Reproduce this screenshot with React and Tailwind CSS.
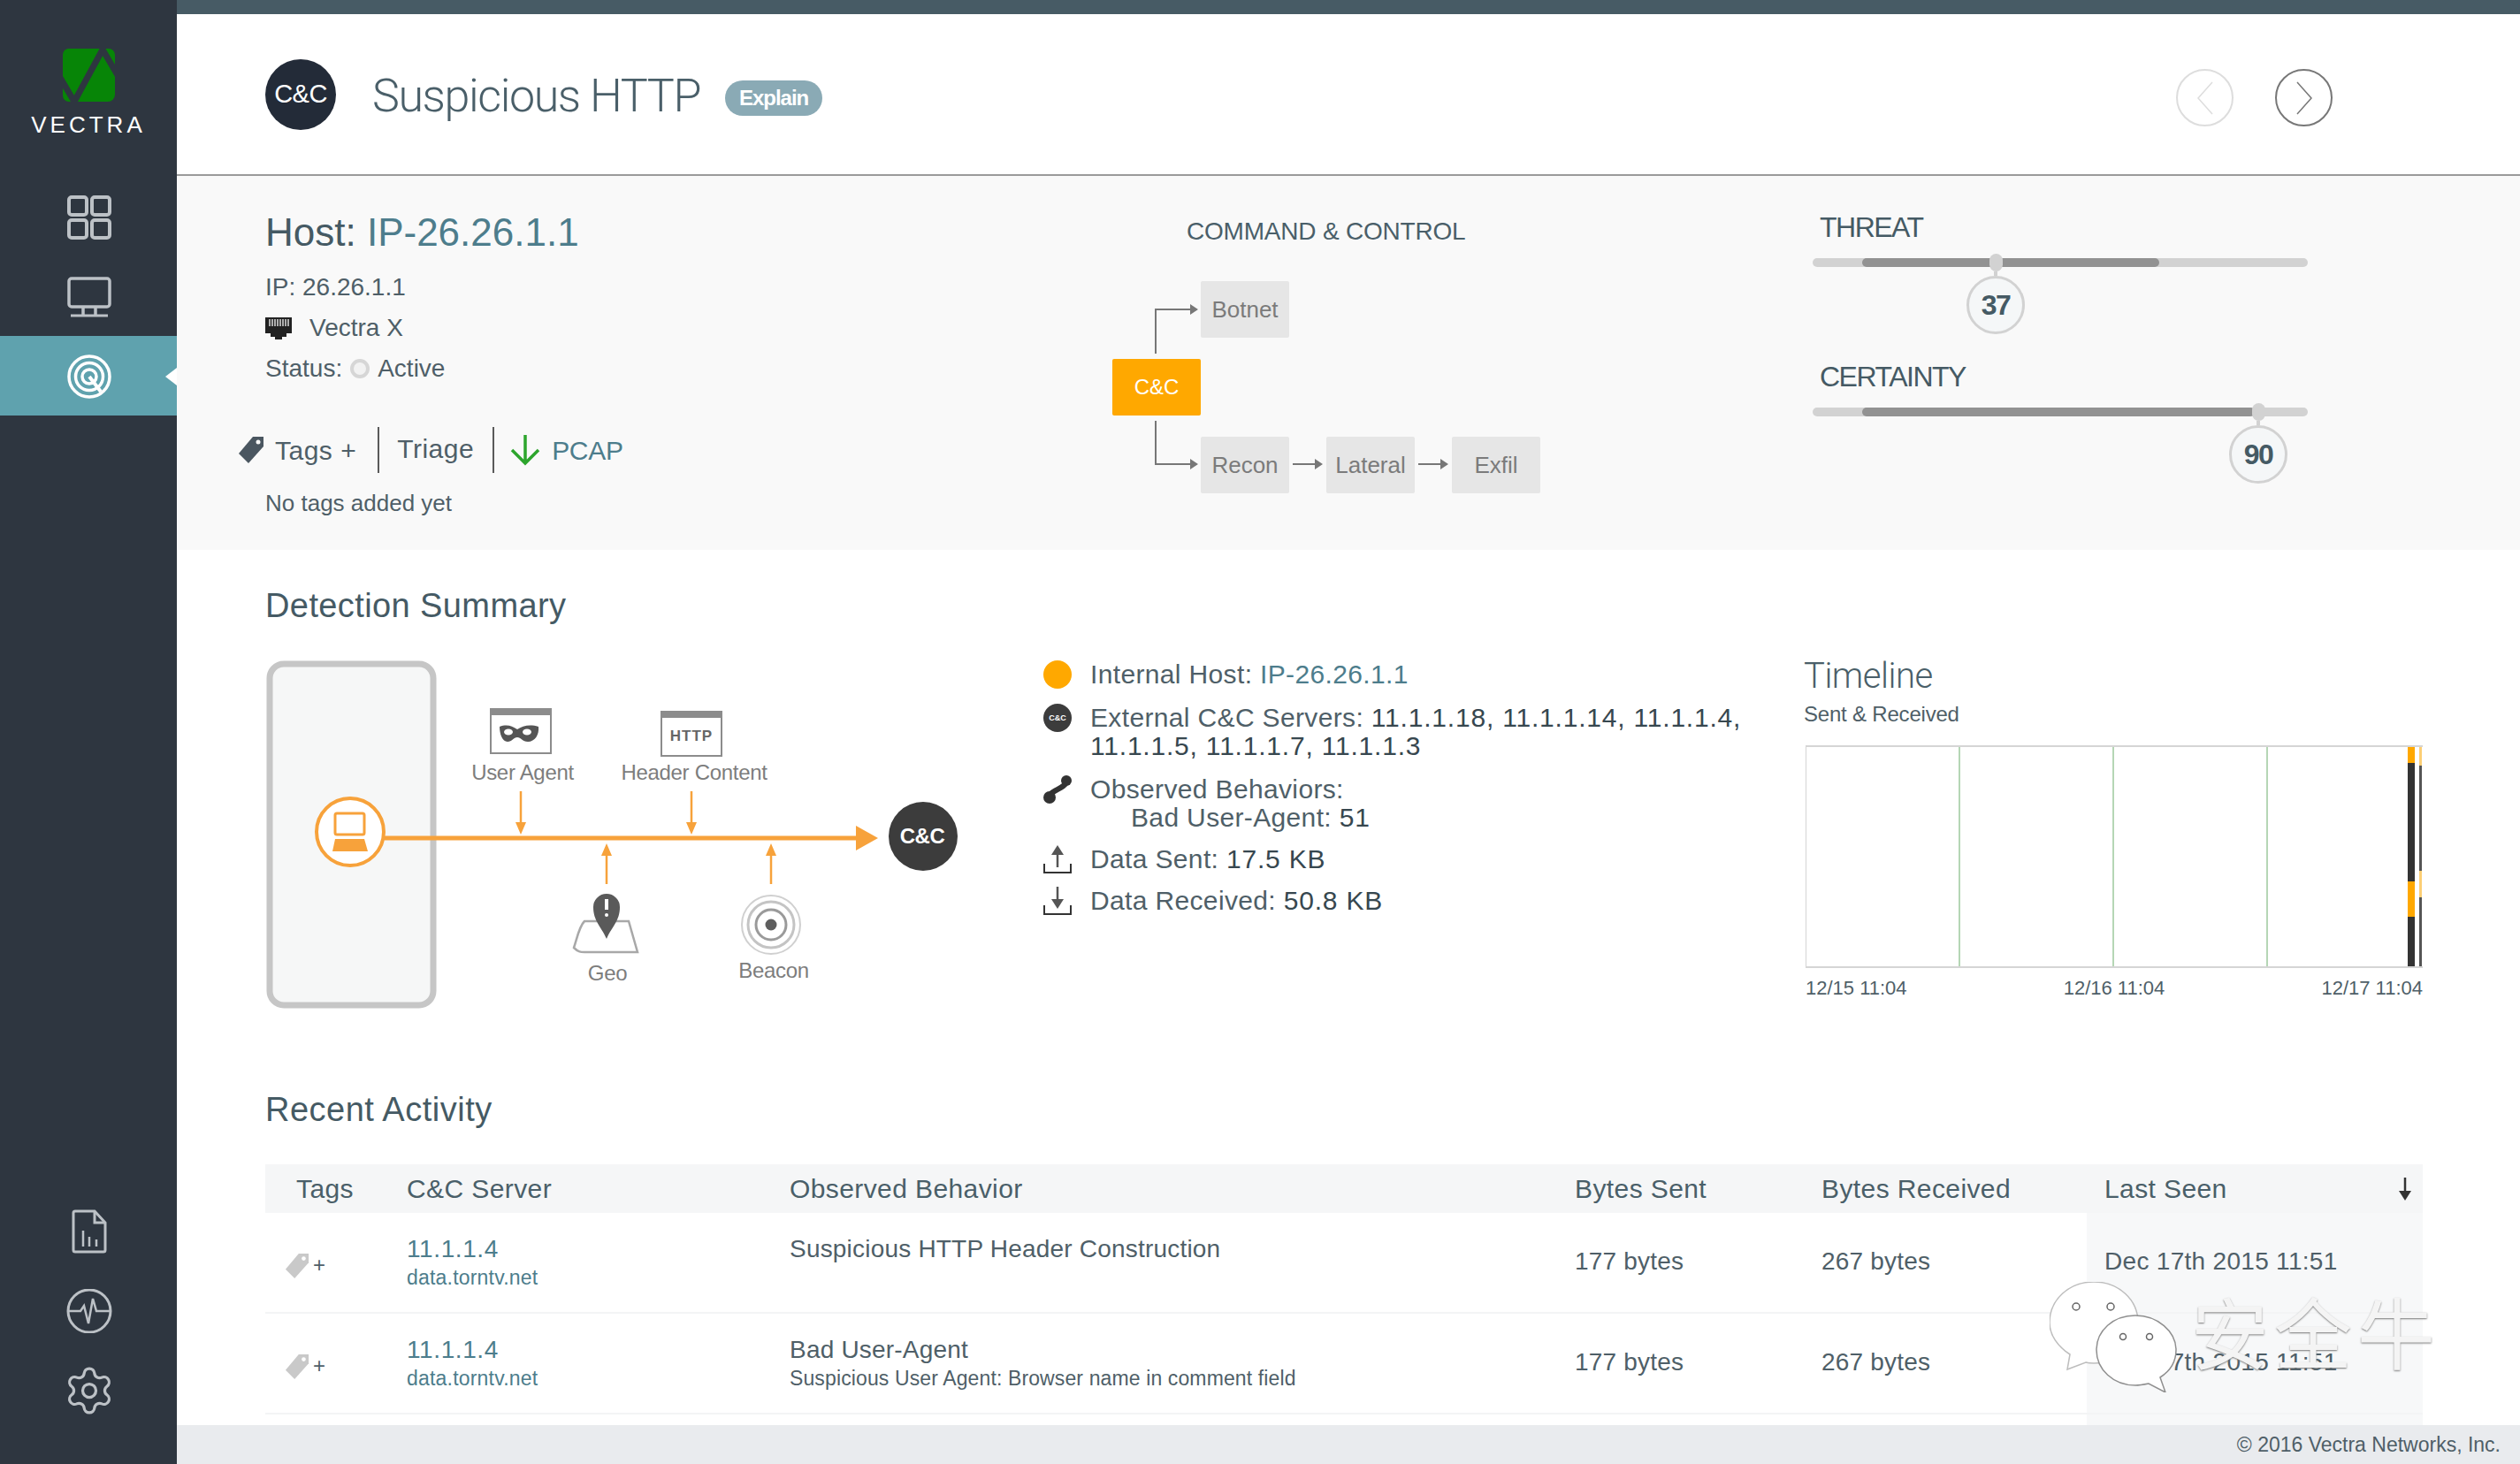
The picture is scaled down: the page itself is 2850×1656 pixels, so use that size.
import { Settings } from 'lucide-react';

const font = "[font-family:'Liberation_Sans','Noto_Sans_CJK_SC',sans-serif]";

const GridIcon = () => (
  <svg width="50" height="50" viewBox="0 0 50 50" fill="none" stroke="#bcc1c6" strokeWidth="4">
    <rect x="2" y="2" width="20" height="20" rx="3" />
    <rect x="28" y="2" width="20" height="20" rx="3" />
    <rect x="2" y="28" width="20" height="20" rx="3" />
    <rect x="28" y="28" width="20" height="20" rx="3" />
  </svg>
);

const MonitorIcon = () => (
  <svg width="50" height="46" viewBox="0 0 50 46" fill="none" stroke="#bcc1c6" strokeWidth="3.5">
    <rect x="2" y="2" width="46" height="32" rx="3" />
    <path d="M18 34v9M32 34v9" />
    <path d="M4 44h42" strokeWidth="3" />
  </svg>
);

const TargetIcon = () => (
  <svg width="50" height="50" viewBox="0 0 50 50" fill="none" stroke="#fff" strokeWidth="3.5">
    <circle cx="25" cy="25" r="23" />
    <circle cx="25" cy="25" r="15.5" />
    <circle cx="25" cy="25" r="8" />
    <path d="M25 25l13 17" strokeWidth="4" />
  </svg>
);

const ReportIcon = () => (
  <svg width="40" height="50" viewBox="0 0 40 50" fill="none" stroke="#bcc1c6" strokeWidth="3">
    <path d="M4 2h22l12 13v31a2 2 0 0 1-2 2H4a2 2 0 0 1-2-2V4a2 2 0 0 1 2-2z" />
    <path d="M26 2v13h12" />
    <path d="M13 24v18M20 31v11M28 34v8" strokeWidth="2.5" />
  </svg>
);

const PulseIcon = () => (
  <svg width="52" height="50" viewBox="0 0 52 50" fill="none" stroke="#bcc1c6" strokeWidth="3">
    <circle cx="26" cy="25" r="24" />
    <path d="M2 25h14l4-6 5 20 5-28 4 14h16" strokeWidth="2.5" />
  </svg>
);

const Logo = () => (
  <svg width="59" height="60" viewBox="72 55 59 60">
    <path d="M78 55h46a7 7 0 0 1 7 7v45a8 8 0 0 1-8 8H79a7 7 0 0 1-7-7V62a7 7 0 0 1 6-7z" fill="#078507" />
    <path d="M68 86l17 29L117 56l17 29" fill="none" stroke="#2e3640" strokeWidth="7" />
  </svg>
);

const NavItem = ({ active, children }) => (
  <div className={active ? 'relative h-[90px] pl-[2px] pt-[2px] flex items-center justify-center bg-[#5fa2ae]' : 'h-[90px] pl-[2px] pt-[2px] flex items-center justify-center'}>
    {children}
    {active && <div className="absolute right-0 top-[36px] w-0 h-0 border-y-[10px] border-y-transparent border-r-[13px] border-r-white"></div>}
  </div>
);

const Sidebar = () => (
  <div className="w-[200px] shrink-0 bg-[#2e3640] flex flex-col">
    <div className="h-[200px] flex flex-col items-center pt-[55px]">
      <Logo />
      <span className="mt-[11px] text-[26px] leading-[30px] tracking-[4px] text-white">VECTRA</span>
    </div>
    <NavItem><GridIcon /></NavItem>
    <NavItem><MonitorIcon /></NavItem>
    <NavItem active><TargetIcon /></NavItem>
    <div className="flex-1"></div>
    <NavItem><ReportIcon /></NavItem>
    <NavItem><PulseIcon /></NavItem>
    <NavItem><Settings size={60} color="#bcc1c6" strokeWidth={1.3} /></NavItem>
    <div className="h-[39px]"></div>
  </div>
);

const Chevron = ({ dir, color }) => (
  <div className="w-[65px] h-[65px] rounded-full border-2 flex items-center justify-center" style={{ borderColor: color }}>
    <svg width="20" height="38" viewBox="0 0 20 38" fill="none" stroke={color} strokeWidth="1.5">
      <path d={dir === 'left' ? 'M18 1L2 19l16 18' : 'M2 1l16 18L2 37'} />
    </svg>
  </div>
);

const Header = () => (
  <div className="h-[183px] shrink-0 bg-white border-b-2 border-[#9a9a9a] flex items-center pl-[100px] pr-[212px]">
    <div className="w-[80px] h-[80px] rounded-full bg-[#232b38] flex items-center justify-center text-white text-[29px] tracking-[-0.5px]">C&amp;C</div>
    <h1 className="ml-[41px] mt-[4px] text-[52px] leading-[60px] tracking-[-1.4px] text-[#4a5f69] [font-family:Roboto,sans-serif] font-light">Suspicious HTTP</h1>
    <span className="ml-[28px] mt-[9px] w-[110px] h-[40px] rounded-full bg-[#8aaab5] text-white text-[24px] font-bold tracking-[-1px] flex items-center justify-center">Explain</span>
    <div className="ml-auto mt-[8px] flex gap-[47px]">
      <Chevron dir="left" color="#dddddd" />
      <Chevron dir="right" color="#777777" />
    </div>
  </div>
);

const FlowBox = ({ className, children }) => (
  <div className={`absolute w-[100px] h-[64px] flex items-center justify-center rounded-[2px] text-[26px] ${className}`}>{children}</div>
);

const CommandFlow = () => (
  <div className="relative w-[792px] shrink-0">
    <div className="ml-[84px] mt-[43px] h-[40px] flex items-center text-[28px] tracking-[-0.2px] text-[#4a5f69] whitespace-nowrap">COMMAND &amp; CONTROL</div>
    <svg className="absolute left-0 top-0" width="792" height="423" viewBox="1258 199 792 423" fill="none" stroke="#777" strokeWidth="2">
      <path d="M1307 400v-50h42M1307 476v49h42M1462 525h26M1604 525h26" />
      <path d="M1346 344l9 6-9 6zM1346 519l9 6-9 6zM1487 519l9 6-9 6zM1629 519l9 6-9 6z" fill="#777" stroke="none" />
    </svg>
    <FlowBox className="left-[100px] top-[119px] bg-[#e6e6e6] text-[#7b7b7b]">Botnet</FlowBox>
    <FlowBox className="left-0 top-[207px] bg-[#ffa800] text-white !text-[24px]">C&amp;C</FlowBox>
    <FlowBox className="left-[100px] top-[295px] bg-[#e6e6e6] text-[#7b7b7b]">Recon</FlowBox>
    <FlowBox className="left-[242px] top-[295px] bg-[#e6e6e6] text-[#7b7b7b]">Lateral</FlowBox>
    <FlowBox className="left-[384px] top-[295px] bg-[#e6e6e6] text-[#7b7b7b]">Exfil</FlowBox>
  </div>
);

const Score = ({ label, value, fillClass, knobClass, className }) => (
  <div className={className}>
    <div className="h-[40px] pl-[8px] flex items-center text-[32px] tracking-[-1.5px] text-[#455a64]">{label}</div>
    <div className="relative mt-[15px] h-[10px] rounded-full bg-[#d2d2d2] pl-[56px]">
      <div className={`h-[10px] rounded-full bg-[#929292] ${fillClass}`}></div>
      <div className={`absolute top-[-5px] w-[66px] flex flex-col items-center ${knobClass}`}>
        <div className="w-[15px] h-[20px] rounded-full bg-[#d2d2d2]"></div>
        <div className="w-[4px] h-[5px] bg-[#d2d2d2]"></div>
        <div className="w-[66px] h-[66px] rounded-full border-[3px] border-[#d2d2d2] bg-[#f5f7f8] flex items-center justify-center text-[32px] font-bold tracking-[-1.5px] text-[#455a64]">{value}</div>
      </div>
    </div>
  </div>
);

const HostInfo = () => (
  <div className="w-[1058px] shrink-0 pl-[100px]">
    <div className="mt-[40px] h-[48px] flex items-center text-[44px] text-[#455a64] whitespace-pre">Host: <span className="text-[#4d7d8c]">IP-26.26.1.1</span></div>
    <div className="mt-[18px] h-[40px] flex items-center text-[28px] text-[#4f5f68]">IP: 26.26.1.1</div>
    <div className="mt-[6px] h-[40px] flex items-center text-[28px] text-[#4f5f68]">
      <svg width="30" height="25" viewBox="0 0 30 25" className="mr-[20px]">
        <path d="M0 0h30v18h-6v4h-5v3h-8v-3H6v-4H0z" fill="#222" />
        <path d="M5 2v8M8 2v8M11 2v8M14 2v8M17 2v8M20 2v8M23 2v8M26 2v8" stroke="#ddd" strokeWidth="1.5" />
      </svg>
      Vectra X
    </div>
    <div className="mt-[6px] h-[40px] flex items-center text-[28px] text-[#4f5f68]">
      Status:
      <span className="mx-[9px] w-[22px] h-[22px] rounded-full border-[4px] border-[#d6d6d6] bg-[#f2f2f2]"></span>
      Active
    </div>
    <div className="ml-[-30px] mt-[45px] h-[54px] flex items-center text-[30px] text-[#4f5f68]">
      <svg width="28" height="30" viewBox="0 0 28 30" className="mr-[13px]">
        <path d="M16 0h12v11L11 30 0 19z" fill="#4a5660" />
        <circle cx="22" cy="6" r="2.5" fill="#f9f9f9" />
      </svg>
      <span className="tracking-[0.5px]">Tags +</span>
      <div className="ml-[24px] w-[2px] h-[52px] bg-[#5a5a5a]"></div>
      <span className="ml-[20px] mb-[4px] tracking-[0.5px]">Triage</span>
      <div className="ml-[21px] w-[2px] h-[52px] bg-[#5a5a5a]"></div>
      <svg width="36" height="36" viewBox="0 0 36 36" fill="none" stroke="#2da52d" strokeWidth="3.5" className="ml-[17px]">
        <path d="M18 1v32M3 18l15 15 15-15" />
      </svg>
      <span className="ml-[12px] tracking-[-0.3px] text-[#4d7d8c]">PCAP</span>
    </div>
    <div className="mt-[15px] h-[36px] flex items-center text-[26px] text-[#4f5f68]">No tags added yet</div>
  </div>
);

const SubHeader = () => (
  <div className="h-[423px] shrink-0 bg-[#f9f9f9] flex">
    <HostInfo />
    <CommandFlow />
    <div className="w-[560px] shrink-0 pt-[38px]">
      <Score label="THREAT" value="37" fillClass="w-[336px]" knobClass="left-[174px]" />
      <Score label="CERTAINTY" value="90" fillClass="w-[444px]" knobClass="left-[471px]" className="mt-[104px]" />
    </div>
  </div>
);

const DiagramLabel = ({ className, children }) => (
  <span className={`absolute -translate-x-1/2 -translate-y-1/2 text-[24px] tracking-[-0.3px] text-[#7d7d7d] whitespace-nowrap ${className}`}>{children}</span>
);

const DetectionDiagram = () => (
  <div className="relative w-[880px] h-[410px] shrink-0">
    <svg className="absolute inset-0" width="880" height="410" viewBox="300 740 880 410" fill="none">
      <rect x="305" y="751" width="185" height="386" rx="16" fill="#f6f7f7" stroke="#c6c6c6" strokeWidth="7" />
      <g transform="translate(0 2)">
        {/* arrows */}
        <path d="M435 946h535" stroke="#f7a23b" strokeWidth="5" />
        <path d="M968 932l25 14-25 14z" fill="#f7a23b" />
        <path d="M589 893v38M782 893v38M686 965v33M872 965v33" stroke="#f7a23b" strokeWidth="2.5" />
        <path d="M583 928l6 14 6-14zM776 928l6 14 6-14zM680 966l6-14 6 14zM866 966l6-14 6 14z" fill="#f7a23b" />
        {/* c&c */}
        <circle cx="1044" cy="944" r="39" fill="#3c3c3c" />
        {/* user agent */}
        <rect x="555" y="800" width="68" height="50" stroke="#8c8c8c" strokeWidth="2" fill="#fff" />
        <rect x="555" y="800" width="68" height="7" fill="#8c8c8c" />
        <path d="M565 820c8-3 14-1 20 3 6-4 14-6 24-3 1 9-4 17-12 17-6 0-8-5-12-5s-6 5-11 5c-6 0-9-9-9-17z" fill="#555" />
        <ellipse cx="575" cy="826" rx="5" ry="3.5" fill="#fff" />
        <ellipse cx="596" cy="826" rx="5" ry="3.5" fill="#fff" />
        {/* header content */}
        <rect x="748" y="803" width="68" height="50" stroke="#8c8c8c" strokeWidth="2" fill="#fff" />
        <rect x="748" y="803" width="68" height="7" fill="#8c8c8c" />
        {/* geo */}
        <path d="M661 1040c-6 6-8 18-12 30 5 5 8 5 12 5h60l-10-35z" fill="#fff" stroke="#a8a8a8" strokeWidth="2.5" />
        <path d="M686 1060c-6-14-15-20-15-36a15 15 0 0 1 30 0c0 16-9 22-15 36z" fill="#5a5a5a" />
        <path d="M686 1015v12" stroke="#fff" strokeWidth="4" />
        <circle cx="686" cy="1033" r="2" fill="#fff" />
        {/* beacon */}
        <circle cx="872" cy="1044" r="33" stroke="#d0d0d0" strokeWidth="2" />
        <circle cx="872" cy="1044" r="26" stroke="#c4c4c4" strokeWidth="3" />
        <circle cx="872" cy="1044" r="17" stroke="#9a9a9a" strokeWidth="3" />
        <circle cx="872" cy="1044" r="6.5" fill="#5e5e5e" />
      </g>
      {/* laptop */}
      <circle cx="396" cy="941" r="38" fill="#fff" stroke="#f7a23b" strokeWidth="4" />
      <rect x="379" y="920" width="33" height="24" rx="2" stroke="#f7a23b" strokeWidth="3" />
      <path d="M379 949h33l4 14h-40z" fill="#f7a23b" />
    </svg>
    <DiagramLabel className="left-[291px] top-[134px]">User Agent</DiagramLabel>
    <DiagramLabel className="left-[485px] top-[134px]">Header Content</DiagramLabel>
    <DiagramLabel className="left-[387px] top-[361px]">Geo</DiagramLabel>
    <DiagramLabel className="left-[575px] top-[358px]">Beacon</DiagramLabel>
    <span className="absolute left-[743px] top-[206px] -translate-x-1/2 -translate-y-1/2 text-[24px] font-bold tracking-[-0.5px] text-white">C&amp;C</span>
    <span className="absolute left-[482px] top-[93px] -translate-x-1/2 -translate-y-1/2 text-[17px] font-bold tracking-[1px] text-[#666]">HTTP</span>
  </div>
);

const DetailRow = ({ icon, className, children }) => (
  <div className={`flex text-[30px] leading-[32px] tracking-[0.35px] text-[#4f5f68] ${className || ''}`}>
    <div className="w-[53px] shrink-0 h-[32px] flex items-center">{icon}</div>
    <div>{children}</div>
  </div>
);

const Dark = ({ children }) => <span className="tracking-[0.8px] text-[#37474f]">{children}</span>;

const Details = () => (
  <div className="w-[860px] shrink-0 pt-[7px] flex flex-col gap-[17px]">
    <DetailRow icon={<div className="w-[32px] h-[32px] rounded-full bg-[#ffa800]"></div>}>
      Internal Host: <span className="text-[#4d7d8c]">IP-26.26.1.1</span>
    </DetailRow>
    <DetailRow icon={<div className="w-[32px] h-[32px] rounded-full bg-[#3c3c3c] flex items-center justify-center text-[9px] font-bold tracking-normal text-white">C&amp;C</div>}>
      External C&amp;C Servers: <Dark>11.1.1.18, 11.1.1.14, 11.1.1.4,</Dark>
      <br />
      <Dark>11.1.1.5, 11.1.1.7, 11.1.1.3</Dark>
    </DetailRow>
    <DetailRow icon={
      <svg width="32" height="32" viewBox="0 0 32 32" fill="none" stroke="#333" strokeWidth="6">
        <path d="M26 7c-2 9-18 9-20 18" />
        <circle cx="26" cy="6" r="6" fill="#333" stroke="none" />
        <circle cx="7" cy="25" r="7" fill="#333" stroke="none" />
      </svg>
    }>
      Observed Behaviors:
      <div className="pl-[46px]">Bad User-Agent: <Dark>51</Dark></div>
    </DetailRow>
    <DetailRow className="mt-[-2px]" icon={
      <svg width="32" height="32" viewBox="0 0 32 32" fill="none">
        <path d="M16 0l7 11H9z" fill="#555" />
        <path d="M16 10v15" stroke="#555" strokeWidth="2.5" />
        <path d="M1 21v10h30V21" stroke="#333" strokeWidth="2" />
      </svg>
    }>
      Data Sent: <Dark>17.5 KB</Dark>
    </DetailRow>
    <DetailRow className="mt-[-2px]" icon={
      <svg width="32" height="32" viewBox="0 0 32 32" fill="none">
        <path d="M16 25l7-11H9z" fill="#555" />
        <path d="M16 0v15" stroke="#555" strokeWidth="2.5" />
        <path d="M1 21v10h30V21" stroke="#333" strokeWidth="2" />
      </svg>
    }>
      Data Received: <Dark>50.8 KB</Dark>
    </DetailRow>
  </div>
);

const Timeline = () => (
  <div className="w-[700px] shrink-0 pt-[1px]">
    <div className="h-[48px] flex items-center text-[40px] tracking-[-0.5px] text-[#4a5f69] [font-family:Roboto,sans-serif] font-light">Timeline</div>
    <div className="mt-[4px] h-[30px] flex items-center text-[24px] tracking-[-0.2px] text-[#4f5f68]">Sent &amp; Received</div>
    <div className="relative ml-[2px] mt-[20px] h-[252px] border-y-2 border-l border-[#d5d5d5] grid grid-cols-[174px_174px_174px_1fr]">
      <div className="border-r-2 border-[#b5d6b5]"></div>
      <div className="border-r-2 border-[#b5d6b5]"></div>
      <div className="border-r-2 border-[#b5d6b5]"></div>
      <div className="flex justify-end gap-[5px] pr-[1px]">
        <div className="w-[8px] flex flex-col">
          <div className="h-[18px] bg-[#ffa800]"></div>
          <div className="h-[134px] bg-[#333]"></div>
          <div className="h-[40px] bg-[#ffa800]"></div>
          <div className="flex-1 bg-[#333]"></div>
        </div>
        <div className="w-[3px] flex flex-col">
          <div className="h-[21px] bg-[#fdcf75]"></div>
          <div className="h-[119px] bg-[#555]"></div>
          <div className="h-[30px] bg-[#fdcf75]"></div>
          <div className="flex-1 bg-[#555]"></div>
        </div>
      </div>
    </div>
    <div className="ml-[2px] mt-[10px] flex justify-between text-[22px] leading-[26px] text-[#4f5f68]">
      <span>12/15 11:04</span>
      <span>12/16 11:04</span>
      <span>12/17 11:04</span>
    </div>
  </div>
);

const rows = [
  { server: '11.1.1.4', host: 'data.torntv.net', behavior: 'Suspicious HTTP Header Construction', note: '' },
  { server: '11.1.1.4', host: 'data.torntv.net', behavior: 'Bad User-Agent', note: 'Suspicious User Agent: Browser name in comment field' },
];

const ActivityTable = () => (
  <div className="mt-[37px] w-[2440px]">
    <div className="h-[55px] bg-[#f5f6f7] grid grid-cols-[160px_433px_888px_279px_300px_380px] items-center text-[30px] tracking-[0.4px] text-[#4a5f69]">
      <div className="pl-[35px]">Tags</div>
      <div>C&amp;C Server</div>
      <div>Observed Behavior</div>
      <div>Bytes Sent</div>
      <div>Bytes Received</div>
      <div className="pl-[20px] pr-[13px] flex items-center justify-between">
        Last Seen
        <svg width="14" height="26" viewBox="0 0 14 26">
          <path d="M7 0v18" stroke="#333" strokeWidth="2.5" />
          <path d="M0 15l7 11 7-11z" fill="#333" />
        </svg>
      </div>
    </div>
    {rows.map((row, i) => (
      <div key={i} className="h-[114px] border-b-2 border-[#f3f4f5] grid grid-cols-[160px_433px_888px_279px_300px_380px] text-[#4f5f68]">
        <div className="pl-[22px] pt-[46px] flex items-start">
          <svg width="28" height="28" viewBox="0 0 28 30">
            <path d="M16 0h12v11L11 30 0 19z" fill="#c9c9c9" />
            <circle cx="22" cy="6" r="2.5" fill="#fff" />
          </svg>
          <span className="ml-[4px] text-[24px] leading-[26px]">+</span>
        </div>
        <div className="pt-[25px]">
          <div className="text-[28px] leading-[32px] tracking-[0.6px] text-[#4d7d8c]">{row.server}</div>
          <div className="text-[23px] leading-[32px] tracking-[0.2px] text-[#4d7d8c]">{row.host}</div>
        </div>
        <div className="pt-[25px]">
          <div className="text-[28px] leading-[32px] tracking-[0.2px]">{row.behavior}</div>
          {row.note && <div className="text-[23px] leading-[32px] tracking-[0.12px]">{row.note}</div>}
        </div>
        <div className="pt-[39px] text-[28px] leading-[32px] tracking-[0.2px]">177 bytes</div>
        <div className="pt-[39px] text-[28px] leading-[32px] tracking-[0.2px]">267 bytes</div>
        <div className="pt-[39px] pl-[20px] text-[28px] leading-[32px] tracking-[0.3px] bg-[#f7f8f9]">Dec 17th 2015 11:51</div>
      </div>
    ))}
    <div className="ml-[2060px] w-[380px] h-[20px] bg-[#f7f8f9]"></div>
  </div>
);

// wechat style mark that sits over the table
const Watermark = () => (
  <div className="absolute left-[2318px] top-[1450px] flex items-start">
    <svg width="145" height="125" viewBox="0 0 145 125" fill="#fff" stroke="#bdbdbd" strokeWidth="1.5">
      <path d="M50 0c28 0 50 20 50 46 0 26-22 46-50 46-3 0-6 0-9-1l-21 8 3-17C9 73 0 60 0 46 0 20 22 0 50 0z" />
      <path d="M97 38c25 0 46 18 46 39 0 13-7 24-18 31l6 17-19-10c-5 1-10 2-15 2-25 0-44-18-44-40s19-39 44-39z" fill="#fff" stroke="#8f8f8f" />
      <circle cx="30" cy="28" r="4" fill="none" stroke="#666" />
      <circle cx="69" cy="28" r="4" fill="none" stroke="#666" />
      <circle cx="83" cy="62" r="3.5" fill="none" stroke="#666" />
      <circle cx="113" cy="62" r="3.5" fill="none" stroke="#666" />
    </svg>
    <span className="ml-[15px] mt-[8px] text-[88px] leading-[92px] tracking-[6px] text-[#f4f4f4] [font-family:'Noto_Sans_CJK_SC',sans-serif] whitespace-nowrap [text-shadow:0_1px_2px_#777]">安全牛</span>
  </div>
);

const App = () => (
  <div className={`relative w-[2850px] h-[1656px] overflow-hidden flex bg-white ${font}`}>
    <Sidebar />
    <div className="w-[2650px] flex flex-col">
      <div className="h-[16px] shrink-0 bg-[#475b65]"></div>
      <Header />
      <SubHeader />
      <div className="flex-1 min-h-0 overflow-hidden pl-[100px]">
        <h2 className="mt-[38px] h-[50px] flex items-center text-[38px] font-normal tracking-[0.4px] text-[#455a64]">Detection Summary</h2>
        <div className="mt-[30px] h-[490px] flex">
          <DetectionDiagram />
          <Details />
          <Timeline />
        </div>
        <h2 className="h-[50px] flex items-center text-[38px] font-normal tracking-[0.5px] text-[#455a64]">Recent Activity</h2>
        <ActivityTable />
      </div>
      <div className="h-[44px] shrink-0 bg-[#e9ebee] flex items-center justify-end pr-[22px] text-[23px] text-[#4f5f68]">© 2016 Vectra Networks, Inc.</div>
    </div>
    <Watermark />
  </div>
);

export default App;
